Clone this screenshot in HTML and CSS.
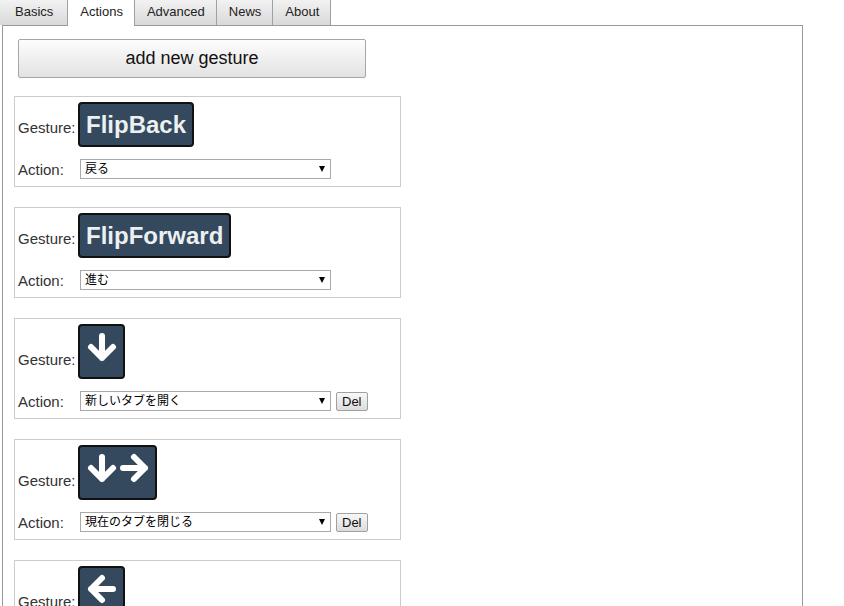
FILE: index.html
```html
<!DOCTYPE html>
<html lang="ja">
<head>
<meta charset="UTF-8">
<meta name="viewport" content="width=device-width, initial-scale=1.0">
<title>Gesture Options</title>
<link rel="stylesheet" href="styles.css">
</head>
<body>
  <ul class="tabs">
    <li><a href="#basics">Basics</a></li>
    <li class="active"><a href="#actions">Actions</a></li>
    <li><a href="#advanced">Advanced</a></li>
    <li><a href="#news">News</a></li>
    <li><a href="#about">About</a></li>
  </ul>

  <div class="panel" id="actions">
    <button class="add-button" type="button">add new gesture</button>

    <div class="gesture-box">
      <div class="gesture-row">
        <span class="gesture-label">Gesture:</span>
        <span class="badge badge-text">FlipBack</span>
      </div>
      <div class="action-row">
        <span class="action-label">Action:</span>
        <span class="select-wrap">
          <select class="action-select">
            <option>戻る</option>
          </select>
        </span>
      </div>
    </div>

    <div class="gesture-box">
      <div class="gesture-row">
        <span class="gesture-label">Gesture:</span>
        <span class="badge badge-text">FlipForward</span>
      </div>
      <div class="action-row">
        <span class="action-label">Action:</span>
        <span class="select-wrap">
          <select class="action-select">
            <option>進む</option>
          </select>
        </span>
      </div>
    </div>

    <div class="gesture-box">
      <div class="gesture-row">
        <span class="gesture-label">Gesture:</span>
        <span class="badge badge-icons">
          <svg class="arrow" viewBox="0 0 32 32"><path d="M16 5v22M5 16l11 11 11-11"/></svg>
        </span>
      </div>
      <div class="action-row">
        <span class="action-label">Action:</span>
        <span class="select-wrap">
          <select class="action-select">
            <option>新しいタブを開く</option>
          </select>
        </span>
        <button class="del-button" type="button">Del</button>
      </div>
    </div>

    <div class="gesture-box">
      <div class="gesture-row">
        <span class="gesture-label">Gesture:</span>
        <span class="badge badge-icons">
          <svg class="arrow" viewBox="0 0 32 32"><path d="M16 5v22M5 16l11 11 11-11"/></svg>
          <svg class="arrow" viewBox="0 0 32 32"><path d="M5 16h22M16 5l11 11-11 11"/></svg>
        </span>
      </div>
      <div class="action-row">
        <span class="action-label">Action:</span>
        <span class="select-wrap">
          <select class="action-select">
            <option>現在のタブを閉じる</option>
          </select>
        </span>
        <button class="del-button" type="button">Del</button>
      </div>
    </div>

    <div class="gesture-box">
      <div class="gesture-row">
        <span class="gesture-label">Gesture:</span>
        <span class="badge badge-icons">
          <svg class="arrow" viewBox="0 0 32 32"><path d="M27 16H5M16 5L5 16l11 11"/></svg>
        </span>
      </div>
      <div class="action-row">
        <span class="action-label">Action:</span>
        <span class="select-wrap">
          <select class="action-select">
            <option>戻る</option>
          </select>
        </span>
        <button class="del-button" type="button">Del</button>
      </div>
    </div>
  </div>
</body>
</html>
```

FILE: styles.css
```css
html {
  overflow: hidden;
}

body {
  margin: 0;
  font-family: "Liberation Sans", Arial, "Noto Sans CJK JP", sans-serif;
  background-color: #fff;
  color: #333;
}

.tabs {
  display: flex;
  list-style-type: none;
  margin: 0;
  padding: 0;
  height: 25px;
}

.tabs li {
  height: 25px;
  border-right: 1px solid #a0a0a0;
  background: linear-gradient(#f2f2f2, #d9d9d9);
}

.tabs li a {
  display: block;
  padding: 0 11px 0 12px;
  line-height: 24px;
  font-size: 13px;
  color: #222;
  text-decoration: none;
}

.tabs li:first-child a {
  padding: 0 14px 0 15px;
}

.tabs li.active {
  position: relative;
  z-index: 1;
  height: 26px;
  background: #fff;
  border-left: 1px solid #a0a0a0;
  margin-left: -1px;
}

.panel {
  width: 801px;
  box-sizing: border-box;
  margin-left: 2px;
  min-height: 700px;
  border: 1px solid #999;
  padding: 13px 0 0 11px;
}

.add-button {
  display: block;
  width: 348px;
  height: 39px;
  margin: 0 0 18px 4px;
  border: 1px solid #a6a6a6;
  border-radius: 2px;
  background: linear-gradient(#fdfdfd, #e2e2e2);
  font-family: "Liberation Sans", Arial, sans-serif;
  font-size: 18px;
  color: #111;
}

.gesture-box {
  width: 387px;
  box-sizing: border-box;
  border: 1px solid #ccc;
  padding: 5px 3px 7px 3px;
  margin-bottom: 20px;
}

.gesture-row {
  display: flex;
  align-items: flex-end;
}

.gesture-label {
  width: 60px;
  font-size: 15px;
  line-height: 17px;
  margin-bottom: 11px;
}

.badge {
  display: inline-flex;
  border: 2px solid #111;
  border-radius: 4px;
  background-color: #34495e;
  color: #ecf0f1;
}

.badge-text {
  padding: 7px 6px;
  font-size: 24px;
  font-weight: bold;
  line-height: 27px;
}

.badge-icons {
  padding: 5px 5.5px 14px;
}

.arrow {
  display: block;
  width: 32px;
  height: 32px;
  fill: none;
  stroke: #fff;
  stroke-width: 6;
  stroke-linecap: round;
  stroke-linejoin: round;
}

.action-row {
  display: flex;
  align-items: center;
  margin-top: 12px;
}

.action-label {
  width: 62px;
  font-size: 15px;
  line-height: 17px;
}

.select-wrap {
  position: relative;
  display: inline-block;
}

.select-wrap::after {
  content: "";
  position: absolute;
  right: 6px;
  top: 7px;
  border-left: 3.5px solid transparent;
  border-right: 3.5px solid transparent;
  border-top: 6px solid #000;
  pointer-events: none;
}

.action-select {
  display: block;
  appearance: none;
  width: 251px;
  height: 20px;
  margin: 0;
  padding: 0 4px;
  border: 1px solid #a9a9a9;
  border-radius: 0;
  background: #fff;
  font-family: "Liberation Sans", "Noto Sans CJK JP", sans-serif;
  font-size: 12px;
  color: #000;
}

.del-button {
  height: 19px;
  margin-left: 5px;
  padding: 0 5px;
  border: 1px solid #a0a0a0;
  border-radius: 2px;
  background: linear-gradient(#f8f8f8, #dcdcdc);
  font-family: "Liberation Sans", Arial, sans-serif;
  font-size: 13px;
  line-height: 17px;
  color: #111;
}
```
